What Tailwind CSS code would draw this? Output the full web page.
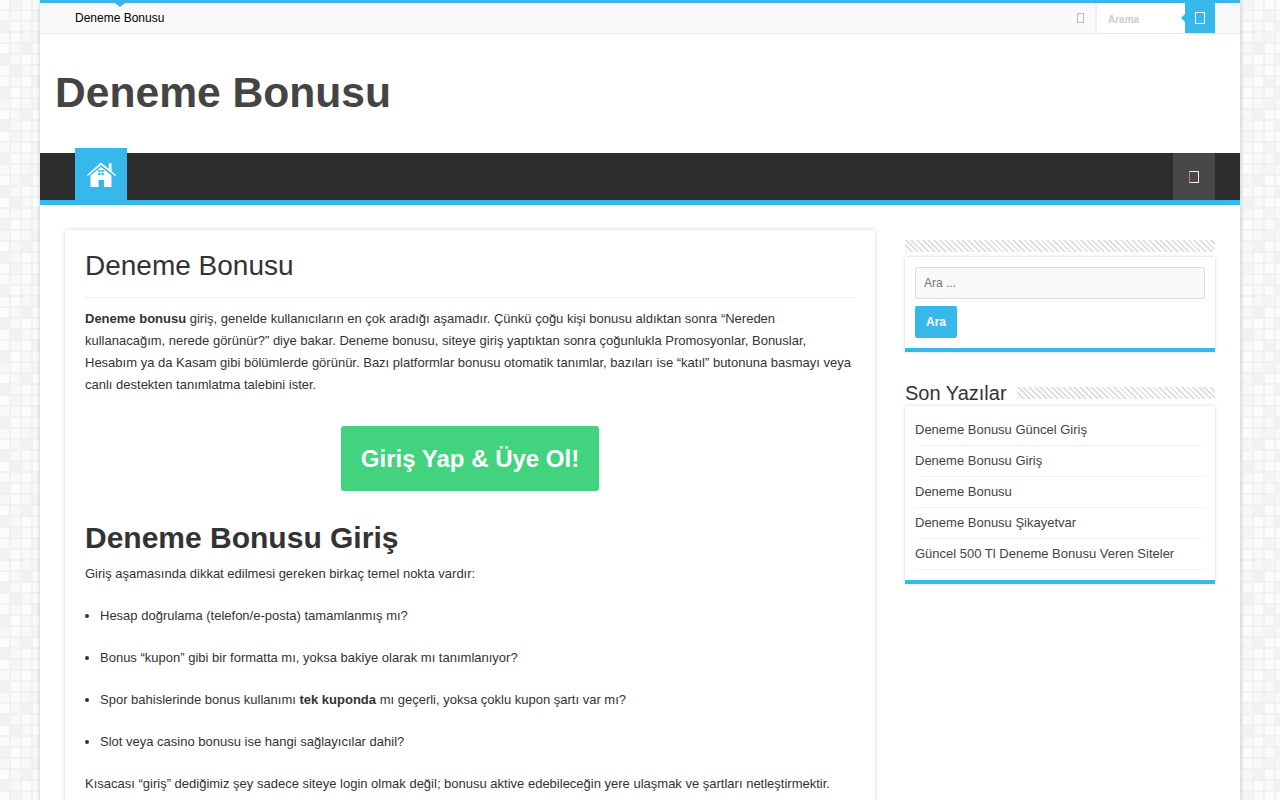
<!DOCTYPE html>
<html lang="tr">
<head>
<meta charset="utf-8" />
<meta name="viewport" content="width=device-width, initial-scale=1" />
<title>Deneme Bonusu</title>
<script src="https://cdn.jsdelivr.net/npm/@tailwindcss/browser@4"></script>
</head>
<body class="relative overflow-hidden h-[800px] bg-[#fafafa] font-['Liberation_Sans',Arial,sans-serif] text-[13px] text-[#333]">

<!-- tiled page background -->
<svg class="absolute inset-0 h-full w-full" aria-hidden="true">
  <defs>
    <pattern id="tiles" width="44" height="132" patternUnits="userSpaceOnUse">
      <rect width="44" height="132" fill="#f1f1f1"/>
      <rect x="0" y="0" width="9" height="9" fill="#fcfcfc"/><rect x="11" y="0" width="9" height="9" fill="#f5f5f5"/><rect x="22" y="0" width="9" height="9" fill="#fafafa"/><rect x="33" y="0" width="9" height="9" fill="#fcfcfc"/>
      <rect x="0" y="11" width="9" height="9" fill="#fafafa"/><rect x="11" y="11" width="9" height="9" fill="#f9f9f9"/><rect x="22" y="11" width="9" height="9" fill="#fcfcfc"/><rect x="33" y="11" width="9" height="9" fill="#f5f5f5"/>
      <rect x="0" y="22" width="9" height="9" fill="#f2f2f2"/><rect x="11" y="22" width="9" height="9" fill="#fcfcfc"/><rect x="22" y="22" width="9" height="9" fill="#f8f8f8"/><rect x="33" y="22" width="9" height="9" fill="#fafafa"/>
      <rect x="0" y="33" width="9" height="9" fill="#f9f9f9"/><rect x="11" y="33" width="9" height="9" fill="#fbfbfb"/><rect x="22" y="33" width="9" height="9" fill="#f7f7f7"/><rect x="33" y="33" width="9" height="9" fill="#f5f5f5"/>
      <rect x="0" y="44" width="9" height="9" fill="#fcfcfc"/><rect x="11" y="44" width="9" height="9" fill="#f7f7f7"/><rect x="22" y="44" width="9" height="9" fill="#f2f2f2"/><rect x="33" y="44" width="9" height="9" fill="#fcfcfc"/>
      <rect x="0" y="55" width="9" height="9" fill="#f2f2f2"/><rect x="11" y="55" width="9" height="9" fill="#f9f9f9"/><rect x="22" y="55" width="9" height="9" fill="#fcfcfc"/><rect x="33" y="55" width="9" height="9" fill="#fafafa"/>
      <rect x="0" y="66" width="9" height="9" fill="#fcfcfc"/><rect x="11" y="66" width="9" height="9" fill="#f2f2f2"/><rect x="22" y="66" width="9" height="9" fill="#f8f8f8"/><rect x="33" y="66" width="9" height="9" fill="#fcfcfc"/>
      <rect x="0" y="77" width="9" height="9" fill="#fafafa"/><rect x="11" y="77" width="9" height="9" fill="#f8f8f8"/><rect x="22" y="77" width="9" height="9" fill="#fcfcfc"/><rect x="33" y="77" width="9" height="9" fill="#f4f4f4"/>
      <rect x="0" y="88" width="9" height="9" fill="#f2f2f2"/><rect x="11" y="88" width="9" height="9" fill="#fcfcfc"/><rect x="22" y="88" width="9" height="9" fill="#f7f7f7"/><rect x="33" y="88" width="9" height="9" fill="#fafafa"/>
      <rect x="0" y="99" width="9" height="9" fill="#f7f7f7"/><rect x="11" y="99" width="9" height="9" fill="#fbfbfb"/><rect x="22" y="99" width="9" height="9" fill="#f8f8f8"/><rect x="33" y="99" width="9" height="9" fill="#f4f4f4"/>
      <rect x="0" y="110" width="9" height="9" fill="#fcfcfc"/><rect x="11" y="110" width="9" height="9" fill="#f8f8f8"/><rect x="22" y="110" width="9" height="9" fill="#f2f2f2"/><rect x="33" y="110" width="9" height="9" fill="#fcfcfc"/>
      <rect x="0" y="121" width="9" height="9" fill="#f2f2f2"/><rect x="11" y="121" width="9" height="9" fill="#f8f8f8"/><rect x="22" y="121" width="9" height="9" fill="#fcfcfc"/><rect x="33" y="121" width="9" height="9" fill="#fafafa"/>
    </pattern>
  </defs>
  <rect width="100%" height="100%" fill="url(#tiles)"/>
</svg>

<div class="relative mx-auto w-[1200px] bg-white shadow-[0_0_4px_rgba(0,0,0,0.22)]">

  <!-- top bar -->
  <div class="relative flex h-[34px] border-t-[3px] border-b border-t-[#37b8eb] border-b-[#e9e9e9] bg-[#fafafa]">
    <span class="absolute left-[75px] top-0 h-0 w-0 border-x-[5px] border-t-[4px] border-x-transparent border-t-[#37b8eb]"></span>
    <a href="#" class="ml-[35px] pt-[6px] text-[12px] leading-[18px] text-black">Deneme Bonusu</a>
    <div class="ml-auto mr-[25px] flex">
      <span class="mr-[11px] mt-[10px] h-[10px] w-[7px] border border-[#bbbbbb]"></span>
      <div class="flex w-[90px] items-center border-l-2 border-[#f0f0f0] bg-white pl-[11px] pt-[2px] text-[10px] font-bold text-[#cccccc]">Arama</div>
      <div class="relative flex w-[30px] items-center justify-center bg-[#37b8eb]">
        <span class="absolute left-[-4px] top-[11px] h-0 w-0 border-y-[4px] border-r-[4px] border-y-transparent border-r-[#37b8eb]"></span>
        <span class="h-[12px] w-[10px] border border-white"></span>
      </div>
    </div>
  </div>

  <!-- logo -->
  <div class="flex h-[119px] items-center pb-[2px] pl-[15px]">
    <h1 class="text-[42.6px] font-bold leading-none text-[#444444]">Deneme Bonusu</h1>
  </div>

  <!-- main nav -->
  <nav class="relative flex h-[52px] justify-between border-b-[5px] border-[#37b8eb] bg-[#2d2d2d] pl-[35px] pr-[25px]">
    <a href="#" class="mt-[-5px] flex h-[52px] w-[52px] items-center justify-center bg-[#37b8eb] pt-[1px]">
      <svg class="h-[25px] w-[29px]" viewBox="0 0 29 25" fill="#ffffff" aria-hidden="true">
        <path d="M0 13 L14 0.5 L21.8 7 V1 H24.5 V9.3 L29 13 L28.2 14 L14 3 L0.8 14 Z"/>
        <path fill-rule="evenodd" d="M14 5 L24.5 13.5 V25 H17 V18 H11.5 V25 H3.5 V13.5 Z M11.3 8 V10.2 H13.6 V8 Z M14.4 8 V10.2 H16.7 V8 Z M11.3 11 V13.2 H13.6 V11 Z M14.4 11 V13.2 H16.7 V11 Z"/>
      </svg>
    </a>
    <div class="flex h-[47px] w-[42px] items-center justify-center bg-[#484848] pt-[1px]">
      <span class="h-[12px] w-[10px] border border-[#f5f0d8] border-l-[#e0705a]"></span>
    </div>
  </nav>

  <div class="flex items-start gap-[30px] px-[25px] pt-[25px]">

    <!-- article -->
    <main class="w-[810px] shrink-0 rounded-[2px] bg-white px-[20px] pt-[19px] shadow-[0_0_4px_rgba(0,0,0,0.18)]">
      <h2 class="border-b border-[#eeeeee] pb-[14px] text-[28px] font-normal leading-[34px] text-[#333333]">Deneme Bonusu</h2>
      <p class="mt-[10px] leading-[22px]"><strong class="font-bold">Deneme bonusu</strong> giriş, genelde kullanıcıların en çok aradığı aşamadır. Çünkü çoğu kişi bonusu aldıktan sonra “Nereden kullanacağım, nerede görünür?” diye bakar. Deneme bonusu, siteye giriş yaptıktan sonra çoğunlukla Promosyonlar, Bonuslar, Hesabım ya da Kasam gibi bölümlerde görünür. Bazı platformlar bonusu otomatik tanımlar, bazıları ise “katıl” butonuna basmayı veya canlı destekten tanımlatma talebini ister.</p>
      <div class="mt-[30px] flex justify-center">
        <a href="#" class="flex h-[65px] w-[258px] items-center justify-center rounded-[3px] bg-[#42d37e] text-[24px] font-bold text-white">Giriş Yap &amp; Üye Ol!</a>
      </div>
      <h2 class="mt-[28px] text-[30px] font-bold leading-[38px] text-[#333333]">Deneme Bonusu Giriş</h2>
      <p class="mt-[6px] leading-[22px]">Giriş aşamasında dikkat edilmesi gereken birkaç temel nokta vardır:</p>
      <ul class="mt-[20px] list-disc pl-[15px] leading-[22px]">
        <li>Hesap doğrulama (telefon/e-posta) tamamlanmış mı?</li>
        <li class="mt-[20px]">Bonus “kupon” gibi bir formatta mı, yoksa bakiye olarak mı tanımlanıyor?</li>
        <li class="mt-[20px]">Spor bahislerinde bonus kullanımı <strong class="font-bold">tek kuponda</strong> mı geçerli, yoksa çoklu kupon şartı var mı?</li>
        <li class="mt-[20px]">Slot veya casino bonusu ise hangi sağlayıcılar dahil?</li>
      </ul>
      <p class="mt-[20px] pb-[40px] leading-[22px]">Kısacası “giriş” dediğimiz şey sadece siteye login olmak değil; bonusu aktive edebileceğin yere ulaşmak ve şartları netleştirmektir.</p>
    </main>

    <!-- sidebar -->
    <aside class="w-[310px] shrink-0 pt-[10px]">
      <div class="h-[12px] bg-[repeating-linear-gradient(45deg,#e2e2e2_0,#e2e2e2_2px,#ffffff_2px,#ffffff_4px)]"></div>
      <div class="mt-[5px] border-b-4 border-[#37b8eb] bg-white p-[10px] shadow-[0_0_3px_rgba(0,0,0,0.2)]">
        <input type="text" placeholder="Ara ..." class="block h-[32px] w-full rounded-[2px] border border-[#dddddd] bg-[#f9f9f9] px-[8px] text-[12px] placeholder:text-[#777777]" />
        <button type="button" class="mt-[7px] block h-[32px] w-[42px] rounded-[2px] bg-[#37b8eb] text-[12px] font-bold text-white">Ara</button>
      </div>

      <div class="mt-[29px] flex items-center">
        <h3 class="mr-[10px] text-[20px] font-normal leading-[24px] text-[#333333]">Son Yazılar</h3>
        <div class="h-[12px] grow bg-[repeating-linear-gradient(45deg,#e2e2e2_0,#e2e2e2_2px,#ffffff_2px,#ffffff_4px)]"></div>
      </div>
      <div class="mt-[1px] border-b-4 border-[#37b8eb] bg-white px-[10px] pb-[10px] pt-[9px] shadow-[0_0_3px_rgba(0,0,0,0.2)]">
        <ul class="leading-[30px] text-[#444444]">
          <li class="border-b border-[#f2f2f2]"><a href="#">Deneme Bonusu Güncel Giriş</a></li>
          <li class="border-b border-[#f2f2f2]"><a href="#">Deneme Bonusu Giriş</a></li>
          <li class="border-b border-[#f2f2f2]"><a href="#">Deneme Bonusu</a></li>
          <li class="border-b border-[#f2f2f2]"><a href="#">Deneme Bonusu Şikayetvar</a></li>
          <li class="border-b border-[#f2f2f2]"><a href="#">Güncel 500 Tl Deneme Bonusu Veren Siteler</a></li>
        </ul>
      </div>
    </aside>
  </div>
</div>
</body>
</html>
